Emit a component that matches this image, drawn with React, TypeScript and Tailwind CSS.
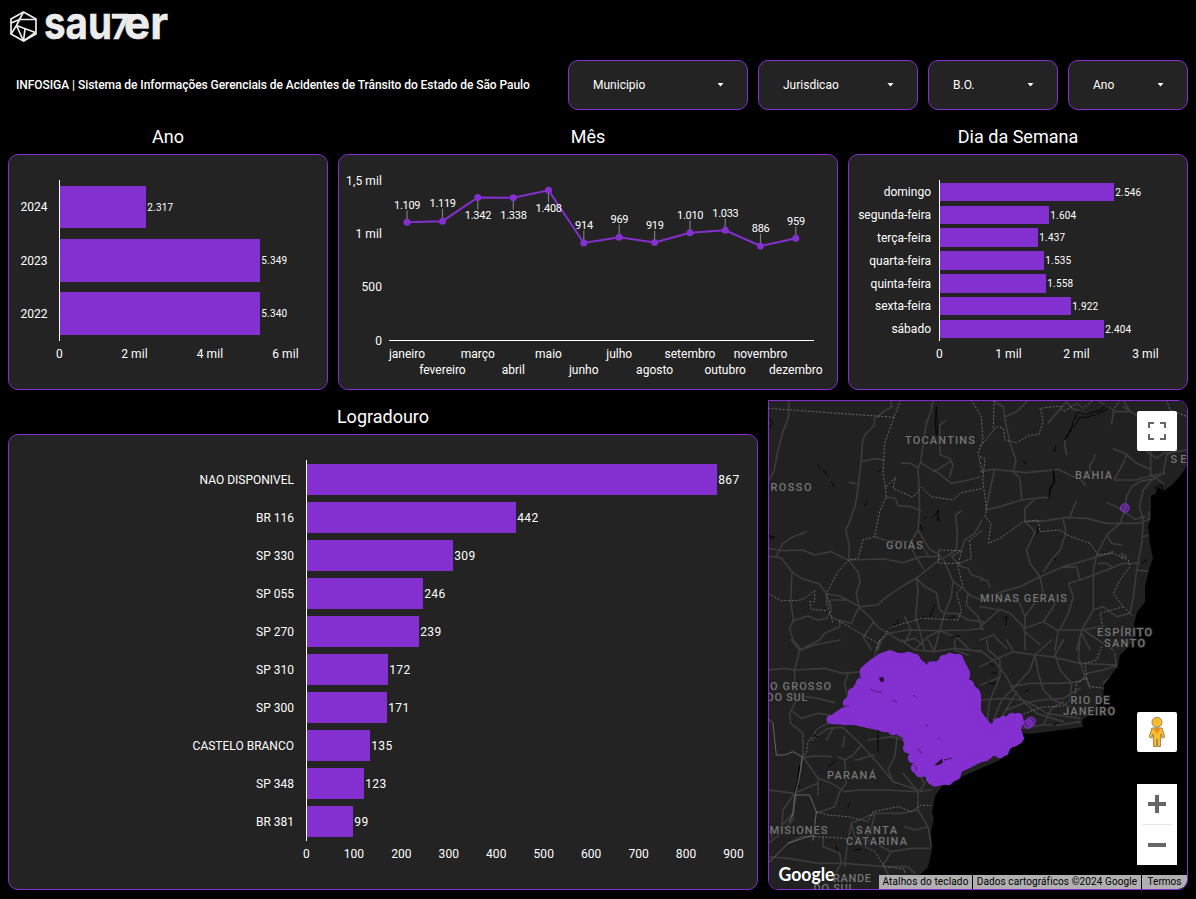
import React from "react";

const PURPLE = "#842fcf";

type Bar = { label: string; value: string; y: number; h: number; end: number };
type Tick = { text: string; x: number };

const years: Bar[] = [
  { label: "2024", value: "2.317", y: 186, h: 42, end: 146 },
  { label: "2023", value: "5.349", y: 239, h: 43, end: 260 },
  { label: "2022", value: "5.340", y: 292, h: 43, end: 260 },
];

const weekdays: Bar[] = [
  { label: "domingo", value: "2.546", y: 183, h: 18, end: 1114 },
  { label: "segunda-feira", value: "1.604", y: 206, h: 18, end: 1049 },
  { label: "terça-feira", value: "1.437", y: 228, h: 19, end: 1038 },
  { label: "quarta-feira", value: "1.535", y: 251, h: 19, end: 1044 },
  { label: "quinta-feira", value: "1.558", y: 274, h: 19, end: 1046 },
  { label: "sexta-feira", value: "1.922", y: 297, h: 18, end: 1071 },
  { label: "sábado", value: "2.404", y: 320, h: 18, end: 1104 },
];

const streets: Bar[] = [
  { label: "NAO DISPONIVEL", value: "867", y: 464, h: 31, end: 717 },
  { label: "BR 116", value: "442", y: 502, h: 31, end: 516 },
  { label: "SP 330", value: "309", y: 540, h: 31, end: 453 },
  { label: "SP 055", value: "246", y: 578, h: 31, end: 423 },
  { label: "SP 270", value: "239", y: 616, h: 31, end: 419 },
  { label: "SP 310", value: "172", y: 654, h: 31, end: 388 },
  { label: "SP 300", value: "171", y: 692, h: 31, end: 387 },
  { label: "CASTELO BRANCO", value: "135", y: 730, h: 31, end: 370 },
  { label: "SP 348", value: "123", y: 768, h: 31, end: 364 },
  { label: "BR 381", value: "99", y: 806, h: 31, end: 353 },
];

const months = [
  { name: "janeiro", v: "1.109", x: 407, y: 222.3, ly: 209 },
  { name: "fevereiro", v: "1.119", x: 442.5, y: 221.2, ly: 207 },
  { name: "março", v: "1.342", x: 477.8, y: 197.4, ly: 219 },
  { name: "abril", v: "1.338", x: 513.3, y: 197.8, ly: 219 },
  { name: "maio", v: "1.408", x: 548.5, y: 190.3, ly: 212 },
  { name: "junho", v: "914", x: 583.8, y: 243, ly: 229 },
  { name: "julho", v: "969", x: 619.2, y: 237.3, ly: 223 },
  { name: "agosto", v: "919", x: 654.6, y: 242.5, ly: 229 },
  { name: "setembro", v: "1.010", x: 690, y: 232.7, ly: 219 },
  { name: "outubro", v: "1.033", x: 725.2, y: 230.3, ly: 217 },
  { name: "novembro", v: "886", x: 760.5, y: 246, ly: 232 },
  { name: "dezembro", v: "959", x: 795.8, y: 238.3, ly: 225 },
];

function Panel({ box, children }: { box: string; children: React.ReactNode }) {
  return (
    <div className="h-full w-full overflow-hidden rounded-[10px] border border-[#842fcf] bg-[#232323]">
      <svg viewBox={box} className="block h-full w-full font-[Roboto,sans-serif]" fill="white">
        {children}
      </svg>
    </div>
  );
}

function BarChart(props: {
  box: string;
  bars: Bar[];
  axis: number;
  labelX: number;
  top: number;
  bottom: number;
  ticks: Tick[];
  tickY: number;
  valueSize: number;
  valueLength: (v: string) => number;
}) {
  const { box, bars, axis, labelX, top, bottom, ticks, tickY, valueSize, valueLength } = props;
  return (
    <Panel box={box}>
      {bars.map((b) => {
        const mid = b.y + b.h / 2;
        return (
          <g key={b.label}>
            <rect x={axis + 1} y={b.y} width={b.end - axis - 1} height={b.h} fill={PURPLE} />
            <text x={labelX} y={Math.round(mid + 4)} fontSize="12" textAnchor="end">
              {b.label}
            </text>
            <text
              x={b.end + 1.2}
              y={Math.round(mid + (valueSize > 11 ? 4 : 3.5))}
              fontSize={valueSize}
              textLength={valueLength(b.value)}
            >
              {b.value}
            </text>
          </g>
        );
      })}
      <rect x={axis} y={top} width="1" height={bottom - top} />
      {ticks.map((t) => (
        <text key={t.text} x={t.x} y={tickY} fontSize="12" textAnchor="middle" letterSpacing="0.1">
          {t.text}
        </text>
      ))}
    </Panel>
  );
}

function MonthChart() {
  return (
    <Panel box="339 155 498 234">
      {[
        { t: "1,5 mil", y: 185 },
        { t: "1 mil", y: 238 },
        { t: "500", y: 291 },
        { t: "0", y: 345 },
      ].map((a) => (
        <text key={a.t} x="382" y={a.y} fontSize="12" textAnchor="end" letterSpacing="0.1">
          {a.t}
        </text>
      ))}
      <rect x="389" y="340" width="425" height="1" />
      {months.map((m) => (
        <line
          key={m.name}
          x1={m.x}
          x2={m.x}
          y1={m.y}
          y2={m.ly < m.y ? m.ly + 1.5 : m.ly - 9.5}
          stroke="#7b7b7b"
          strokeWidth="1.2"
        />
      ))}
      <polyline
        points={months.map((m) => m.x + "," + m.y).join(" ")}
        fill="none"
        stroke={PURPLE}
        strokeWidth="2"
      />
      {months.map((m, i) => (
        <g key={m.name}>
          <circle cx={m.x} cy={m.y} r="3.5" fill={PURPLE} />
          <text
            x={m.x + 0.3}
            y={m.ly}
            fontSize="11"
            textAnchor="middle"
            textLength={m.v.length > 3 ? 26.5 : 18}
          >
            {m.v}
          </text>
          <text x={m.x} y={i % 2 ? 374 : 358} fontSize="12" textAnchor="middle">
            {m.name}
          </text>
        </g>
      ))}
    </Panel>
  );
}

const roadsNW = [
  "M62 0L62 50 45 95 30 150 18 215 0 245",
  "M368 0L372 20 345 35 335 45 320 55 318 78 290 105 283 130 280 180 272 250 262 315 245 365 233 390 244 435 242 480 272 520 276 545 265 580 272 620",
  "M280 184L325 176 348 181",
  "M244 247L270 252",
  "M495 0L490 30 475 70 467 120 458 185 450 205 452 240 455 330 450 390 427 430 438 460 467 508",
  "M400 189L430 191 450 203",
  "M532 62L515 75 517 165 545 175 555 195 545 230",
  "M458 187L500 215 550 182M500 210L550 250 590 243 636 231",
  "M355 292L382 294 390 317 430 320 458 332",
  "M0 445L40 452 105 450 140 465 190 455 240 480 350 477 405 488 460 470 520 470",
  "M115 395L75 410 45 430 25 468M0 468L40 474 72 515 100 535 155 552 175 582 215 588 275 620",
  "M175 585L190 630 185 600 240 600",
  "M275 620L330 615 350 595 400 560 445 535 500 490 520 475",
  "M450 390L470 425 485 448 515 465M467 445L480 465",
  "M320 410L350 420 430 425",
  "M580 332L563 345 568 400 565 450 525 475 545 520 555 545 550 590 530 640 515 690 500 750",
  "M642 360L620 400 590 420 580 452 550 470 580 500 600 505 610 525 645 535",
  "M72 515L68 600 76 660 65 685 75 720 100 750",
  "M76 662L120 648 150 660 175 655 190 632",
  "M100 748L155 720 170 700 215 680 215 660 250 670 272 622 305 650 330 682 360 700 420 690 515 692 600 690 645 685",
  "M318 665L285 710 310 750M360 700L340 720 330 750",
  "M445 535L470 560 505 578 515 630 530 640",
  "M445 535L450 570 443 655 455 690 470 750",
  "M555 545L585 565 605 585 640 600M600 580L595 615 630 650 645 690",
  "M530 640L565 640 600 660 645 665M515 692L480 710 440 750M410 650L430 690 410 730",
  "M365 703L400 725 440 715 465 735M515 692L570 715 600 745",
];

const roadsNE = [
  "M35 0L70 20 75 60 90 130 108 180 100 215 120 235 125 295",
  "M145 0L110 35 75 50",
  "M205 68L260 5 275 25 320 40",
  "M0 215L40 208 140 218 235 208 280 230 305 240 315 255",
  "M43 210L30 270 18 330 60 320 125 300 190 292 210 294",
  "M160 302L135 325 135 365 200 362 260 352 320 355 380 370 480 370 512 355",
  "M288 305L270 350M135 365L165 395 140 450 150 490 180 530",
  "M250 360L258 400 240 450 215 480 190 515",
  "M255 120L255 140 260 165M345 165L340 180 330 195 330 215",
  "M400 147L440 162 430 190 402 240 470 240 520 225 555 220",
  "M440 165L470 190 510 208M512 150L512 225M590 150L560 165 550 220 525 235 480 245 455 260 440 290 435 330 420 370 380 405 350 465 340 510 340 630 305 690 290 750",
  "M382 308L410 320 465 358 495 350",
  "M520 235L490 270 478 320 490 360 485 430 470 510 460 590 450 640",
  "M430 0L450 35 400 35 395 70M430 20L490 60",
  "M0 600L50 580 120 560 180 530 250 500 320 480 400 455",
  "M180 530L190 580 170 600 135 650 135 750",
  "M250 502L290 500 300 540 340 525 380 510 430 490 480 490M300 540L265 550 280 590 265 640 240 690",
  "M0 680L60 628 90 640 135 685 190 665 230 690 310 690 360 680",
  "M115 600L135 650M0 620L60 630M0 720L40 705 80 745M300 690L330 750",
  "M380 405L395 430 425 435M425 460L440 470 425 475 425 460",
  "M355 490L380 490 395 500M470 510L510 515M490 410L510 405M505 335L510 360",
  "M500 155L530 175 550 160 620 150M515 225L550 250M0 540L20 540 30 560",
  "M190 665L220 620 235 590M340 630L370 620 410 650 450 640",
  "M235 690L225 750M310 690L355 720 400 750M130 690L180 735",
];

const roadsSW = [
  "M70 0L95 30 80 90 80 160 85 180 65 220 68 250 105 280 105 350 150 415 190 430 230 455 270 450 360 450 450 455",
  "M95 30L140 15 215 0M0 90L50 85 80 90 170 85 225 100 280 95",
  "M75 165L150 175 200 188M75 215L100 235 150 220 185 225",
  "M240 100L230 130 240 180",
  "M130 300L180 265 225 262 280 315 330 370 375 425 450 450",
  "M175 300L195 265M280 315L255 345 230 360 235 430 215 455M210 350L230 360",
  "M300 300L370 290 410 300M375 425L360 390 380 350 388 290",
  "M262 360L280 358M280 355L320 345M230 290L225 320",
  "M105 350L85 430 75 540 60 555M105 352L140 348 190 350",
  "M0 450L80 460 150 430M80 460L45 510 40 580 0 610M85 465L75 520 10 590",
  "M145 520L200 500 215 455M150 420L150 465",
  "M450 455L430 430 405 400M450 455L450 510 400 520 320 520 250 550 240 600 230 680",
  "M450 455L490 450M450 510L480 560 490 620",
  "M165 590L165 620 215 640 220 670 190 720M0 650L60 655 150 670 230 670 350 680 420 680",
  "M250 550L260 590 300 600 370 635 430 625 485 625M370 635L345 675 370 720",
  "M140 590L100 590 60 610M420 680L440 700M320 520L310 570 290 600",
  "M400 0L440 30 500 35 560 25 640 35M480 0L500 35M560 0L560 30 600 45",
  "M450 400L470 430 455 455M410 560L440 570 480 560",
];

const roadsSE = [
  "M0 30L45 65 80 110 100 150 130 185 170 220 250 245",
  "M0 80L40 60 100 35 165 45 215 50 300 70 410 75",
  "M20 0L25 30 60 60 60 110 30 180 20 250M100 35L80 0",
  "M165 45L175 100 190 150 220 180 270 200",
  "M165 45L150 90 100 145 65 180 40 240M165 45L215 0",
  "M250 0L225 45 240 90 275 130 270 175",
  "M410 75L370 90 320 100 300 125 240 130 150 130 90 140",
  "M0 180L70 175 130 180 170 200 200 220 300 235",
  "M300 0L295 50 315 110 330 145M405 40L410 90 370 130",
  "M80 210L130 190 180 180 250 175 300 145M120 265L190 255 240 255 300 245",
  "M190 255L215 205 250 185M60 110L30 125 0 135M110 155L60 240",
];

const bordersNW =
  "M0 25L380 52M398 0L375 60 350 130 345 220 352 262 383 232 375 265 435 292 460 262 490 290 555 300 580 278 645 265M352 262L355 290 335 335 320 410 285 420 270 475 242 480 210 515 178 575 175 610 190 650 330 730 325 750M190 650L195 672M0 580L40 602 90 602 110 595 140 572 140 605 125 605 130 628 175 632M330 730L370 680 430 665 460 655 570 660 580 630 565 580 585 560 570 500 580 452 512 450 512 490 575 490 610 475 605 420 645 390M610 0L640 50 645 120 630 160 645 220";
const bordersNE =
  "M0 140L50 80 70 85 75 120 110 128 150 105 175 105 190 65 180 25 240 18 250 35 290 10 310 25 340 0M0 170L15 175 8 240 20 330 15 350 33 370 25 430 60 415 130 365 175 360 180 395 240 390 260 405 330 430 355 465 400 460 445 480 450 500 420 540 400 580 430 620 460 650M430 620L360 640 370 690M42 0L40 90M350 0L400 30 420 0M560 0L570 30 622 50";
const bordersSW =
  "M335 0L320 45M180 250L150 265 120 305 115 340 100 350M145 515L180 525 240 530 300 545 315 515 390 500 430 515 460 495 490 497M140 590L230 595 275 610 320 635 350 680 410 688 410 700";
const nationalSW =
  "M0 235L15 250 25 345 50 345 75 335 102 350 98 390 90 430 80 465 75 520 65 545M80 465L125 465 145 515 135 600M0 670L60 610 135 585";
const bordersSE =
  "M120 225L185 202 250 198 285 165 290 125 320 115 315 70 350 60 365 20M320 115L330 140 375 145";

const waterNW =
  "M505 20L509 90 505 108 502 70ZM148 192L158 204M165 210L180 230M190 245L198 260M298 305L292 317M6 55L14 70 4 82M3 410L20 410 12 418 3 405ZM457 375L463 390M468 358L474 350M490 355L500 346 512 330 509 350 515 365 505 354M485 650L500 615M470 648L455 662M388 660L390 672 375 675 362 690M540 660L560 650M550 712L575 708M330 215L338 210";
const waterNE =
  "M255 118L270 98 275 80 290 40 300 35 320 42 345 35 365 30 370 18 384 15 380 28 362 38 345 45 318 52 300 52 288 72 275 85ZM228 138L223 155M220 210L222 245 208 270 208 300L210 270 224 245ZM130 185L140 190M485 490L500 480M525 262L545 255 548 270 530 272ZM70 655L80 650 78 675M175 380L172 400M222 478L228 475";
const waterSW =
  "M95 375L88 430 78 470 86 430ZM130 285L150 290M205 360L180 380M330 270L330 335M205 620L208 632M165 580L172 578M260 630L280 628M85 435L95 440M245 488L240 500";
const waterSE = "M35 100L48 98M25 130L45 128 40 135M135 155L145 150M220 255L230 250M30 70L42 78";

const statePath =
  "M188 240L212 222 238 205 246 175 268 140 285 115 286 90 310 70 338 50 366 40 392 50 428 47 448 60 470 85 505 75 545 51 573 53 586 78 596 98 592 120 618 150 629 165 629 215 643 237 668 266 693 246 728 238 754 232 758 245 748 265 758 295 743 308 718 318 712 337 680 338 665 336 655 353 633 358 602 375 572 388 568 408 542 422 500 430 488 422 490 400 460 400 446 388 446 365 432 350 432 335 420 318 416 290 385 272 345 264 300 254 265 246 200 243Z";

const mapLabels = [
  { t: "TOCANTINS", x: 940, y: 444, w: 70 },
  { t: "ROSSO", x: 791, y: 491, w: 41 },
  { t: "BAHIA", x: 1093.5, y: 479, w: 37 },
  { t: "GOIÁS", x: 904.5, y: 549, w: 37 },
  { t: "MINAS GERAIS", x: 1023.5, y: 602, w: 87 },
  { t: "ESPÍRITO", x: 1124.5, y: 636, w: 55 },
  { t: "SANTO", x: 1124.5, y: 647, w: 41 },
  { t: "O GROSSO", x: 800.5, y: 690, w: 61 },
  { t: "DO SUL", x: 787, y: 701, w: 41 },
  { t: "RIO DE", x: 1090, y: 704, w: 39 },
  { t: "JANEIRO", x: 1089, y: 715, w: 52 },
  { t: "PARANÁ", x: 851.5, y: 779, w: 49 },
  { t: "MISIONES", x: 798.5, y: 834, w: 58 },
  { t: "SANTA", x: 876.5, y: 834, w: 41 },
  { t: "CATARINA", x: 876.5, y: 845, w: 61 },
  { t: "RANDE", x: 852, y: 882, w: 38 },
  { t: "DO SUL", x: 834, y: 892, w: 41 },
  { t: "SE", x: 1178.5, y: 463, w: 16 },
];

const edgePoints: [number, number][] = [
  [838, 717], [848, 703], [853, 693], [861, 683], [865, 673], [870, 667], [879, 660], [889, 656],
  [899, 659], [908, 657], [915, 659], [921, 666], [932, 666], [944, 660], [950, 658], [958, 659],
  [961, 667], [965, 675], [969, 685], [975, 693], [976, 703], [976, 713], [983, 722], [991, 729],
  [998, 723], [1004, 721], [1012, 718], [1018, 718], [1018, 739], [1006, 746], [1000, 753],
  [988, 754], [978, 758], [966, 763], [957, 770], [955, 775], [948, 780], [936, 781], [931, 778],
  [920, 772], [916, 768], [913, 758], [908, 748], [908, 740], [893, 730], [884, 727], [873, 723], [860, 721], [845, 720],
];

function RoadGroup({ at, roads, borders, water, solid }: {
  at: string;
  roads: string[];
  borders: string;
  water: string;
  solid?: string;
}) {
  return (
    <g transform={at + " scale(0.33333)"} fill="none" strokeLinejoin="round" strokeLinecap="round">
      <path d={roads.join("")} stroke="#3b3b3b" strokeWidth="5" />
      <path d={water} stroke="#050505" strokeWidth="3" />
      <path d={borders} stroke="#777" strokeWidth="2.6" strokeDasharray="6 5" strokeLinecap="butt" />
      {solid && <path d={solid} stroke="#777" strokeWidth="2.4" />}
    </g>
  );
}

function MapCanvas() {
  return (
    <svg viewBox="769 401 418 488" className="block h-full w-full font-[Roboto,sans-serif]">
      <defs>
        <clipPath id="land">
          <path d="M769 401H1187V466L1180 476 1171 486 1163 491 1158 487 1156 493 1151 496 1151 514 1150 520 1148 527 1150 544 1153 558 1149 570 1147 578 1145 587 1145 602 1137 612 1134 625 1134 640 1127 648 1120 655 1118 666 1111 675 1104 685 1103 698 1098 704 1095 712 1082 720 1083 727 1068 729 1053 731 1030 734 1020 732 1000 760 943 785 935 796 932 813 934 818 931 832 932 850 928 867 915 880 899 889H769Z" />
        </clipPath>
      </defs>
      <rect x="769" y="401" width="418" height="488" fill="#000" />
      <g clipPath="url(#land)">
        <rect x="769" y="401" width="418" height="488" fill="#212121" />
        <RoadGroup at="translate(768 400)" roads={roadsNW} borders={bordersNW} water={waterNW} />
        <RoadGroup at="translate(980 400)" roads={roadsNE} borders={bordersNE} water={waterNE} />
        <RoadGroup at="translate(768 640)" roads={roadsSW} borders={bordersSW} water={waterSW} solid={nationalSW} />
        <RoadGroup at="translate(980 640)" roads={roadsSE} borders={bordersSE} water={waterSE} />
      </g>
      <g fontSize="11" fontWeight="500" fill="#757575" stroke="#212121" strokeWidth="2" paintOrder="stroke" textAnchor="middle">
        {mapLabels.map((l) => (
          <text key={l.t + l.y} x={l.x} y={l.y} textLength={l.w}>
            {l.t}
          </text>
        ))}
      </g>
      <g fill={PURPLE}>
        <path d={statePath} transform="translate(768 640) scale(0.33333)" stroke={PURPLE} strokeWidth="20" strokeLinejoin="round" />
        {edgePoints.map(([x, y]) => (
          <circle key={x + "-" + y} cx={x} cy={y} r="5.2" />
        ))}
        <circle cx="831" cy="719.500" r="4.5" />
      </g>
      <g fill={PURPLE} fillOpacity="0.55" stroke={PURPLE} strokeWidth="1">
        <circle cx="1124.8" cy="508" r="4.4" />
        <circle cx="1031" cy="721.5" r="4.4" />
        <circle cx="1028" cy="724" r="4.4" />
      </g>
      <g fill="none" stroke="#431768" strokeWidth="0.8">
        <path d="M843 708q3-4 6-2M870 689q6 4 12 3M892 700l5 2M913 695l3 2M925 725l3 1M938 738l2 1M917 749q4 1 4 5M914 765q4 3 2 6M926 664q3-5 7-2M861 674q-3 2 0 5" />
        <path d="M935 765l7-6v4l-5 2zM944 760l8-2" fill="#171019" stroke="#211a28" strokeWidth="0.8" />
        <path d="M879 678l4-1 1 4-3 1z" fill="#171019" />
      </g>
      <text x="778.5" y="881" fontSize="18" fontFamily="Lato, sans-serif" fontWeight="700" fill="white" textLength="56" lengthAdjust="spacingAndGlyphs">
        Google
      </text>
    </svg>
  );
}

function MapPanel() {
  return (
    <div className="relative h-[490px] w-[420px] overflow-hidden rounded-tr-[10px] rounded-b-[10px] border border-[#842fcf] bg-black">
      <MapCanvas />
      <button className="absolute top-[10px] right-[10px] flex h-10 w-10 items-center justify-center rounded-[2px] bg-white" aria-label="Tela cheia">
        <svg width="18" height="18" viewBox="0 0 18 18" fill="#666">
          <path d="M0 0v6h2V2h4V0H0zm16 0h-4v2h4v4h2V0h-2zm0 16h-4v2h6v-6h-2v4zM2 12H0v6h6v-2H2v-4z" />
        </svg>
      </button>
      <button className="absolute top-[311px] right-[10px] flex h-10 w-10 items-center justify-center rounded-[2px] bg-white" aria-label="Street View">
        <svg width="18" height="32" viewBox="0 0 18 32" fill="#fbbc2c" stroke="#8b7a55" strokeWidth="0.9" className="-ml-px">
          <path d="M4 12h10l2.800 9-2.600 1-1.400-4-.3 12.500H9.600L9 23l-.6 7.500H5.500L5.200 18l-1.400 4-2.600-1z" />
          <path d="M5.200 12.500h7.600L9 17.500z" fill="#e98b2d" stroke="none" />
          <circle cx="9" cy="6.300" r="5" />
        </svg>
      </button>
      <div className="absolute top-[383px] right-[10px] flex h-[81px] w-10 flex-col items-center bg-white">
        <button className="flex h-10 w-full items-center justify-center" aria-label="Aumentar">
          <svg width="18" height="18" viewBox="0 0 18 18" fill="#666">
            <path d="M7 0h4v7h7v4h-7v7H7v-7H0V7h7z" />
          </svg>
        </button>
        <div className="h-px w-[30px] bg-[#e6e6e6]" />
        <button className="flex h-10 w-full items-center justify-center" aria-label="Diminuir">
          <span className="h-1 w-[18px] bg-[#666]" />
        </button>
      </div>
      <div className="absolute right-0 bottom-0 flex h-[14px] gap-px text-[10px] leading-[14px] text-black">
        <span className="w-[93px] bg-[#b0b0b0] text-center tracking-[0.015em] whitespace-nowrap">Atalhos do teclado</span>
        <span className="w-[168px] bg-[#b0b0b0] text-center tracking-[0.01em] whitespace-nowrap">Dados cartográficos ©2024 Google</span>
        <span className="w-[45px] bg-[#b0b0b0] text-center">Termos</span>
      </div>
    </div>
  );
}

function Logo() {
  return (
    <svg width="180" height="54" viewBox="0 0 180 54" className="block">
      <g fill="none" stroke="#ececec" strokeWidth="1.7" strokeLinejoin="round">
        <path d="M23.500 12L36 19V34L23.500 41L11 34V19Z" />
        <path d="M23.500 12L19.500 19.500H36M19.500 19.500L11 23M19.500 19.500L16.500 25.500L11 34M16.500 25.500L35.500 32.500M16.500 25.500L23.500 41M25 29L23.500 41M35.500 32.500L23.500 41" />
      </g>
      <g fontFamily="Inter, sans-serif" fontWeight="700" fill="#ececec" stroke="#ececec" strokeWidth="0.5">
        <text x="44" y="38.800" fontSize="45" textLength="68" lengthAdjust="spacingAndGlyphs">
          sau
        </text>
        <text x="111" y="38.800" fontSize="34.500" textLength="18" lengthAdjust="spacingAndGlyphs">
          7
        </text>
        <text x="124" y="38.800" fontSize="45" textLength="44" lengthAdjust="spacingAndGlyphs">
          er
        </text>
      </g>
      <path d="M112 14H141V18H112Z" fill="#ececec" />
    </svg>
  );
}

function Filter({ label, size }: { label: string; size: string }) {
  return (
    <button className={"flex h-[50px] items-center justify-between rounded-[10px] border border-[#842fcf] bg-[#232323] pr-[23px] pl-6 text-[12px] " + size}>
      <span>{label}</span>
      <svg width="7" height="4" viewBox="0 0 7 4" fill="white">
        <path d="M0.500 0h6L3.500 3.500z" />
      </svg>
    </button>
  );
}

function Title({ children }: { children: string }) {
  return <h2 className="h-[34px] text-center text-[18px] leading-[34px] font-normal">{children}</h2>;
}

export default function App() {
  return (
    <main className="h-[899px] w-[1196px] overflow-hidden bg-black px-2 font-[Roboto,sans-serif] text-white">
      <header className="-ml-2 h-[60px]">
        <Logo />
      </header>
      <section className="flex h-[50px] items-center">
        <h1 className="w-[560px] pl-2 text-[12px] font-medium tracking-[-0.055px] whitespace-nowrap">
          INFOSIGA | Sistema de Informações Gerenciais de Acidentes de Trânsito do Estado de São Paulo
        </h1>
        <div className="flex gap-[10px]">
          <Filter label="Municipio" size="w-[180px]" />
          <Filter label="Jurisdicao" size="w-[160px]" />
          <Filter label="B.O." size="w-[130px]" />
          <Filter label="Ano" size="w-[120px]" />
        </div>
      </section>
      <section className="flex gap-[10px] pt-[10px]">
        <div className="w-[320px]">
          <Title>Ano</Title>
          <div className="h-[236px]">
            <BarChart
              box="9 155 318 234" bars={years} axis={59} labelX={47.5} top={180} bottom={341} tickY={358}
              valueSize={10} valueLength={() => 26}
              ticks={[{ text: "0", x: 59.5 }, { text: "2 mil", x: 134.5 }, { text: "4 mil", x: 210 }, { text: "6 mil", x: 285.5 }]}
            />
          </div>
        </div>
        <div className="w-[500px]">
          <Title>Mês</Title>
          <div className="h-[236px]">
            <MonthChart />
          </div>
        </div>
        <div className="w-[340px]">
          <Title>Dia da Semana</Title>
          <div className="h-[236px]">
            <BarChart
              box="849 155 338 234" bars={weekdays} axis={939} labelX={931} top={180} bottom={341} tickY={358}
              valueSize={10} valueLength={() => 26}
              ticks={[{ text: "0", x: 939.5 }, { text: "1 mil", x: 1008.5 }, { text: "2 mil", x: 1076.5 }, { text: "3 mil", x: 1145.5 }]}
            />
          </div>
        </div>
      </section>
      <section className="flex gap-[10px] pt-[10px]">
        <div className="w-[750px]">
          <Title>Logradouro</Title>
          <div className="h-[456px]">
            <BarChart
              box="9 435 748 454" bars={streets} axis={306} labelX={294} top={460} bottom={841} tickY={858}
              valueSize={12} valueLength={(v) => v.length * 7}
              ticks={[0, 1, 2, 3, 4, 5, 6, 7, 8, 9].map((n) => ({ text: String(n * 100), x: 306.5 + n * 47.45 }))}
            />
          </div>
        </div>
        <MapPanel />
      </section>
    </main>
  );
}
